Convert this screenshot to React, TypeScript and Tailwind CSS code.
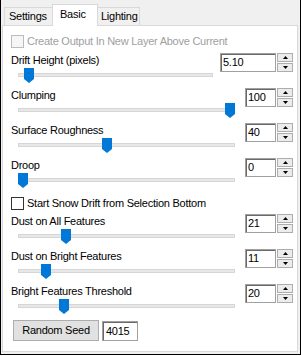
import React from 'react';

interface SliderRow {
  label: string;
  value: string;
  frac: number;
  wide?: boolean;
}

const TOP_ROWS: SliderRow[] = [
  { label: 'Drift Height (pixels)', value: '5.10', frac: 6 / 185, wide: true },
  { label: 'Clumping', value: '100', frac: 1 },
  { label: 'Surface Roughness', value: '40', frac: 0.405 },
  { label: 'Droop', value: '0', frac: 0 },
];

const BOTTOM_ROWS: SliderRow[] = [
  { label: 'Dust on All Features', value: '21', frac: 0.21 },
  { label: 'Dust on Bright Features', value: '11', frac: 0.11 },
  { label: 'Bright Features Threshold', value: '20', frac: 0.2 },
];

function Slider({ frac }: { frac: number }) {
  return (
    <div className="relative h-[15px] ml-[7px]">
      <div className="absolute left-0 right-0 top-[5px] h-[4px] bg-[#e7e7e7] border border-[#d6d6d6]" />
      <div className="absolute top-0" style={{ left: `calc((100% - 10px) * ${frac})` }}>
        <svg width="10" height="15" viewBox="0 0 10 15">
          <polygon points="0,0 10,0 10,11 5,15 0,11" fill="#0078d7" />
        </svg>
      </div>
    </div>
  );
}

function Spin({ value, wide }: { value: string; wide?: boolean }) {
  return (
    <div className={`flex gap-px ${wide ? 'w-[73px] ml-[7px]' : 'w-[48px] ml-[10px]'}`}>
      <div className="flex-1 h-[19px] border border-[#a0a0a0] shadow-[inset_1px_1px_0_#696969] bg-white pl-[2px] leading-[17px]">
        {value}
      </div>
      <div className="flex flex-col gap-px w-[16px]">
        <div className="h-[9px] border border-[#adadad] bg-[#ececec] flex items-center justify-center">
          <svg width="5" height="3" viewBox="0 0 5 3">
            <polygon points="2.5,0 5,3 0,3" fill="#000" />
          </svg>
        </div>
        <div className="h-[9px] border border-[#adadad] bg-[#ececec] flex items-center justify-center">
          <svg width="5" height="3" viewBox="0 0 5 3">
            <polygon points="0,0 5,0 2.5,3" fill="#000" />
          </svg>
        </div>
      </div>
    </div>
  );
}

function Block({ row }: { row: SliderRow }) {
  return (
    <div className="flex items-start h-[30px]">
      <div className="flex-1 flex flex-col">
        <div className="h-[15px] pt-px leading-[13px] whitespace-nowrap">{row.label}</div>
        <Slider frac={row.frac} />
      </div>
      <Spin value={row.value} wide={row.wide} />
    </div>
  );
}

function Check({ label, disabled }: { label: string; disabled?: boolean }) {
  return (
    <div className="flex items-center gap-[3px] h-[13px]">
      <div
        className={`w-[13px] h-[13px] border ${
          disabled ? 'border-[#bcbcbc] bg-[#f6f6f6]' : 'border-[#333333] bg-white'
        }`}
      />
      <span className={`leading-[13px] whitespace-nowrap ${disabled ? 'text-[#a0a0a0]' : 'text-black'}`}>{label}</span>
    </div>
  );
}

export default function App() {
  return (
    <div className="w-[301px] h-[355px] border-l border-r border-b border-black bg-[#f0f0f0] pl-px pr-[2px] pb-[2px] flex flex-col font-['Liberation_Sans',Arial,sans-serif] text-[11px] tracking-[-0.25px] text-black">
      {/* Tabs */}
      <div className="flex items-end h-[25px] pl-[2px]">
        <div className="w-[49px] h-[18px] border-t border-l border-r border-[#d9d9d9] bg-[#f0f0f0] pl-[4px] pt-[2px] leading-[13px]">
          Settings
        </div>
        <div className="relative z-10 -ml-px -mb-px w-[46px] h-[22px] border-t border-l border-r border-[#d9d9d9] bg-white pl-[7px] pt-[3px] leading-[13px]">
          Basic
        </div>
        <div className="-ml-px w-[43px] h-[18px] border-t border-l border-r border-[#d9d9d9] bg-[#f0f0f0] pl-[3px] pt-[2px] leading-[13px]">
          Lighting
        </div>
      </div>

      {/* Panel */}
      <div className="flex-1 border border-[#d9d9d9] bg-white pl-[8px] pr-[4px] pt-[9px] flex flex-col">
        <Check label="Create Output In New Layer Above Current" disabled />
        <div className="flex flex-col gap-[5px] mt-[5px]">
          {TOP_ROWS.map((r) => (
            <Block key={r.label} row={r} />
          ))}
        </div>
        <div className="mt-[9px]">
          <Check label="Start Snow Drift from Selection Bottom" />
        </div>
        <div className="flex flex-col gap-[5px] mt-[4px]">
          {BOTTOM_ROWS.map((r) => (
            <Block key={r.label} row={r} />
          ))}
        </div>
        <div className="flex items-start mt-[6px] ml-[2px]">
          <div className="w-[86px] h-[21px] bg-[#e1e1e1] border border-[#adadad] flex items-center justify-center leading-[13px]">
            Random Seed
          </div>
          <div className="ml-[3px] mt-px w-[36px] h-[20px] border border-[#a0a0a0] shadow-[inset_1px_1px_0_#696969] bg-white pl-[3px] leading-[18px]">
            4015
          </div>
        </div>
      </div>
    </div>
  );
}
